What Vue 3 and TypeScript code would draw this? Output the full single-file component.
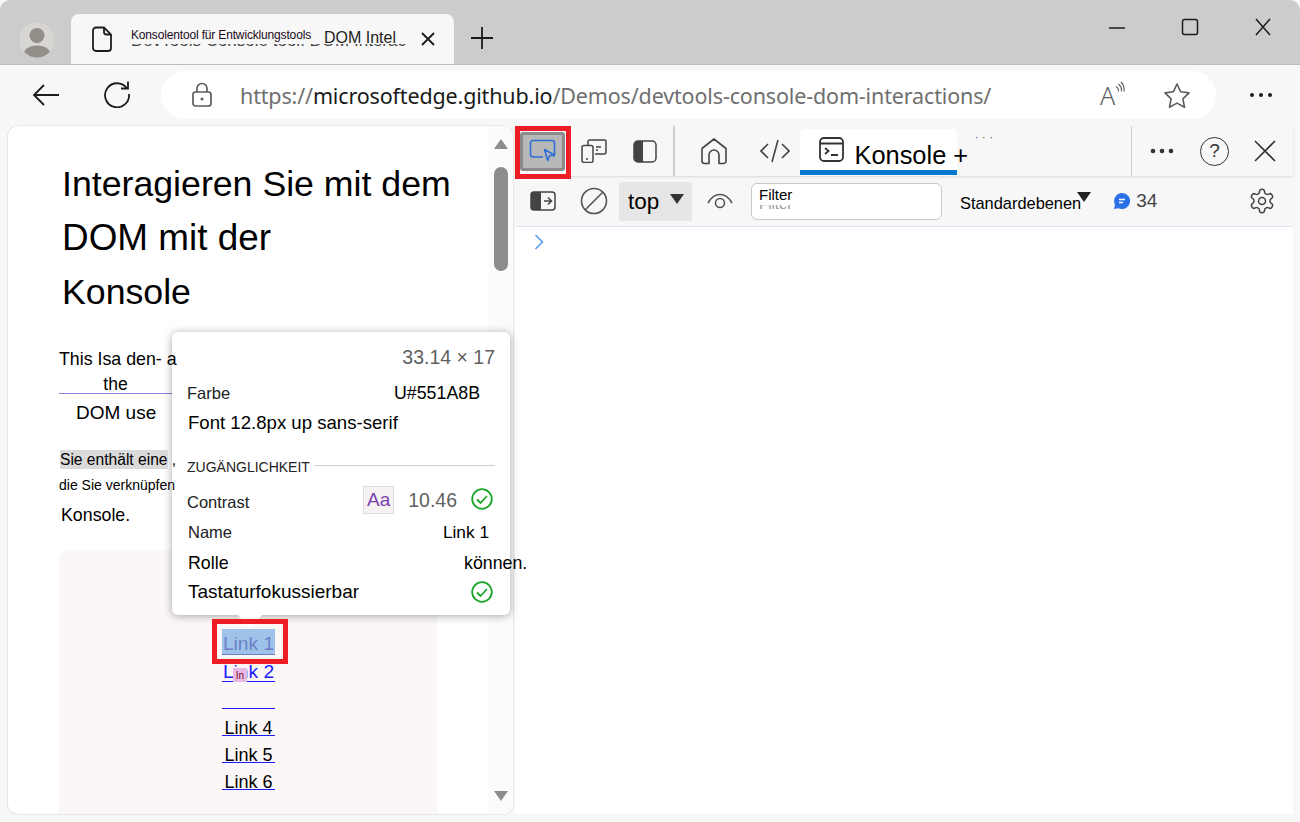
<template>
  <div class="window">
    <!-- Tab strip -->
    <header class="tabstrip">
      <svg class="avatar" width="36" height="36" viewBox="0 0 36 36">
        <defs><clipPath id="av"><circle cx="18" cy="18" r="17.5" /></clipPath></defs>
        <circle cx="18" cy="18" r="17.5" fill="#d8d6d2" />
        <g clip-path="url(#av)" fill="#928e88">
          <circle cx="18" cy="13.500" r="7.500" />
          <ellipse cx="18" cy="31" rx="13" ry="7.500" />
        </g>
      </svg>
      <div class="tab">
        <svg class="doc" width="22" height="26" viewBox="0 0 22 26" fill="none" stroke="#1c1c1c" stroke-width="1.800">
          <path d="M5 1.500h8l7 7v13.500a3 3 0 0 1-3 3H5a3 3 0 0 1-3-3V4.500a3 3 0 0 1 3-3z" />
          <path d="M13 1.500v4.500a2.500 2.500 0 0 0 2.500 2.500H20" />
        </svg>
        <div class="tab-title">
          <span class="ghost-title">DevTools Console tool: DOM Interactions</span>
          <div class="title-over">
            <span class="title-de">Konsolentool für Entwicklungstools</span>
            <span class="title-en">DOM Intel</span>
          </div>
        </div>
        <svg class="tab-close" width="14" height="14" viewBox="0 0 14 14" stroke="#1c1c1c" stroke-width="1.800">
          <path d="M1 1l12 12M13 1L1 13" />
        </svg>
      </div>
      <svg class="new-tab" width="24" height="24" viewBox="0 0 24 24" stroke="#1c1c1c" stroke-width="1.800">
        <path d="M12 1v22M1 12h22" />
      </svg>
      <div class="win-controls">
        <svg width="18" height="18" viewBox="0 0 18 18" stroke="#1c1c1c" stroke-width="1.500"><path d="M1 10h16" /></svg>
        <svg width="18" height="18" viewBox="0 0 18 18" fill="none" stroke="#1c1c1c" stroke-width="1.500"><rect x="1.500" y="1.500" width="15" height="15" rx="2" /></svg>
        <svg width="18" height="18" viewBox="0 0 18 18" stroke="#1c1c1c" stroke-width="1.500"><path d="M2 1l14 16M16 1L2 17" /></svg>
      </div>
    </header>

    <!-- Address bar -->
    <nav class="navbar">
      <svg class="back" width="28" height="24" viewBox="0 0 28 24" fill="none" stroke="#1c1c1c" stroke-width="1.800">
        <path d="M27 12H2M12 2L2 12l10 10" />
      </svg>
      <svg class="reload" width="28" height="28" viewBox="0 0 28 28" fill="none" stroke="#1c1c1c" stroke-width="1.800">
        <path d="M24 8.500A12 12 0 1 0 26 14" />
        <path d="M25 1.500v7h-7" />
      </svg>
      <div class="address">
        <svg class="lock" width="22" height="26" viewBox="0 0 22 26" fill="none" stroke="#5c5c5c" stroke-width="1.700">
          <path d="M6 10V6.500a5 5 0 0 1 10 0V10" />
          <rect x="2" y="10" width="18" height="14" rx="2.500" />
          <circle cx="11" cy="17" r="1.500" fill="#5c5c5c" stroke="none" />
        </svg>
        <span class="url"><span class="dim">https://</span>microsoftedge.github.io<span class="dim">/Demos/devtools-console-dom-interactions/</span></span>
        <span class="read-aloud">
          <span class="read-a">A</span>
          <svg width="10" height="16" viewBox="0 0 10 16" fill="none" stroke="#5c5c5c" stroke-width="1.100">
            <path d="M1 5.500a5 5 0 0 1 2.500 5M3.500 3a8 8 0 0 1 3 7.500M6 1a11 11 0 0 1 3 9.500" />
          </svg>
        </span>
        <svg class="star" width="28" height="27" viewBox="0 0 28 27" fill="none" stroke="#5c5c5c" stroke-width="1.600" stroke-linejoin="round">
          <path d="M14 2l3.700 7.800 8.300 1.100-6.100 5.900 1.600 8.400-7.500-4.100-7.500 4.100 1.600-8.400L2 10.900l8.300-1.100z" />
        </svg>
      </div>
      <svg class="more" width="24" height="6" viewBox="0 0 24 6" fill="#1c1c1c">
        <circle cx="3" cy="3" r="2" /><circle cx="12" cy="3" r="2" /><circle cx="21" cy="3" r="2" />
      </svg>
    </nav>

    <main class="main">
      <!-- Inspected page -->
      <section class="page">
        <div class="page-scroll">
          <div class="page-content">
            <h1>Interagieren Sie mit dem<br /><span class="h1-mid">DOM mit der</span><br />Konsole</h1>
            <p class="l-this">This Isa den- a</p>
            <p class="l-the">the</p>
            <p class="l-dom">DOM use</p>
            <p class="l-sie"><span class="hover-mark">Sie enthält eine</span> ,</p>
            <p class="l-die">die Sie verknüpfen</p>
            <p class="l-kon">Konsole.</p>
            <div class="link-box">
              <a class="link link-hover">Link 1</a>
              <a class="link">Link 2<span class="in-badge">In</span></a>
              <a class="link link-low"></a>
              <a v-for="n in [4, 5, 6]" :key="n" class="link link-low link-black">Link {{ n }}</a>
            </div>
          </div>
          <div class="scrollbar">
            <span class="arrow-up"></span>
            <span class="thumb"></span>
            <span class="arrow-down"></span>
          </div>
        </div>

        <!-- Inspect tooltip -->
        <div class="tooltip">
          <div class="tip-size">33.14 × 17</div>
          <div class="tip-row tip-color">
            <span class="small">Farbe</span><span class="val">U#551A8B</span>
          </div>
          <div class="tip-row tip-font">Font 12.8px up sans-serif</div>
          <div class="tip-head"><span>ZUGÄNGLICHKEIT</span><i></i></div>
          <div class="tip-row tip-contrast">
            <span class="small">Contrast</span>
            <span class="aa">Aa</span>
            <span class="ratio">10.46</span>
            <svg width="22" height="22" viewBox="0 0 22 22" fill="none" stroke="#18a528" stroke-width="1.800">
              <circle cx="11" cy="11" r="9.800" /><path d="M6 11.500l3.500 3.500L16 8" />
            </svg>
          </div>
          <div class="tip-row tip-name">
            <span class="small">Name</span><span class="val-name">Link 1</span>
          </div>
          <div class="tip-row tip-role"><span class="role-label">Rolle</span><span>können.</span></div>
          <div class="tip-row tip-key">
            <span class="key-label">Tastaturfokussierbar</span>
            <svg width="22" height="22" viewBox="0 0 22 22" fill="none" stroke="#18a528" stroke-width="1.800">
              <circle cx="11" cy="11" r="9.800" /><path d="M6 11.500l3.500 3.500L16 8" />
            </svg>
          </div>
        </div>
        <span class="tip-arrow"></span>
        <span class="link-outline"></span>
      </section>

      <!-- DevTools -->
      <section class="devtools">
        <div class="dt-tabs">
          <button class="inspect-btn">
            <svg width="27" height="24" viewBox="0 0 27 24" fill="none" stroke="#2b6fd6" stroke-width="1.600">
              <path d="M14 18H4a2.500 2.500 0 0 1-2.500-2.500V4A2.500 2.500 0 0 1 4 1.500h19A2.500 2.500 0 0 1 25.500 4v11.500a2.500 2.500 0 0 1-1.500 2.300" />
              <path d="M15.500 10.500l9 5-4 1.500-1.800 4.500z" stroke-linejoin="round" />
            </svg>
          </button>
          <svg class="i-device" width="26" height="24" viewBox="0 0 26 24" fill="none" stroke="#444" stroke-width="1.500">
            <path d="M7 6V3a2 2 0 0 1 2-2h15a1.500 1.500 0 0 1 1 1.500V13a2 2 0 0 1-2 2h-9" />
            <rect x="1" y="6.500" width="11" height="17" rx="2" fill="#f7f7f7" />
            <path d="M5 20h2M15 8h5M15 11h2" />
          </svg>
          <svg class="i-panel" width="24" height="23" viewBox="0 0 24 23">
            <rect x="1" y="1" width="22" height="21" rx="4" fill="#f7f7f7" stroke="#444" stroke-width="1.500" />
            <path d="M5 1h5v21H5a4 4 0 0 1-4-4V5a4 4 0 0 1 4-4z" fill="#444" />
          </svg>
          <span class="divider"></span>
          <svg class="i-home" width="28" height="28" viewBox="0 0 28 28" fill="none" stroke="#444" stroke-width="1.600" stroke-linejoin="round">
            <path d="M2 11.500L14 2l12 9.500V24a2.500 2.500 0 0 1-2.500 2.500H19V18a5 5 0 0 0-10 0v8.500H4.500A2.500 2.500 0 0 1 2 24z" />
          </svg>
          <svg class="i-code" width="30" height="24" viewBox="0 0 30 24" fill="none" stroke="#444" stroke-width="1.600">
            <path d="M8 5l-7 7 7 7M22 5l7 7-7 7M18 1l-6 22" />
          </svg>
          <div class="console-tab">
            <svg width="25" height="25" viewBox="0 0 25 25" fill="none" stroke="#333" stroke-width="1.800">
              <rect x="1" y="1" width="23" height="23" rx="4" />
              <path d="M1 6.500h23M6 11l3.500 3-3.500 3M12 18h7" />
            </svg>
            <span>Konsole +</span>
          </div>
          <span class="ghost-dots">· · ·</span>
          <div class="dt-right">
            <span class="divider"></span>
            <svg class="i-dots" width="24" height="6" viewBox="0 0 24 6" fill="#333">
              <circle cx="3" cy="3" r="2.300" /><circle cx="12" cy="3" r="2.300" /><circle cx="21" cy="3" r="2.300" />
            </svg>
            <span class="i-help">?</span>
            <svg class="i-close" width="22" height="22" viewBox="0 0 22 22" stroke="#333" stroke-width="1.600">
              <path d="M1 1l20 20M21 1L1 21" />
            </svg>
          </div>
        </div>

        <div class="dt-filter">
          <svg class="i-side" width="26" height="20" viewBox="0 0 26 20">
            <rect x="1" y="1" width="24" height="18" rx="3" fill="none" stroke="#444" stroke-width="1.500" />
            <path d="M4 1h7v18H4a3 3 0 0 1-3-3V4a3 3 0 0 1 3-3z" fill="#444" />
            <path d="M14 10h7M18 6.500l3.500 3.500-3.500 3.500" fill="none" stroke="#444" stroke-width="1.500" />
          </svg>
          <svg class="i-block" width="28" height="28" viewBox="0 0 28 28" fill="none" stroke="#555" stroke-width="1.600">
            <circle cx="14" cy="14" r="12.500" /><path d="M5 23L23 5" />
          </svg>
          <div class="ctx-select"><span>top</span><i class="caret"></i></div>
          <svg class="i-eye" width="28" height="16" viewBox="0 0 28 16" fill="none" stroke="#555" stroke-width="1.600">
            <path d="M2 10C6 3 10 1.500 14 1.500S22 3 26 10" /><circle cx="14" cy="10" r="4.500" />
          </svg>
          <div class="filter-input">
            <span class="filter-ghost">Filter</span>
            <span class="filter-text">Filter</span>
          </div>
          <span class="levels">Standardebenen</span>
          <i class="caret caret-levels"></i>
          <svg class="i-msg" width="16" height="16" viewBox="0 0 16 16">
            <path d="M8 0a8 8 0 1 1-3.400 15.200L0 16l1-4.300A8 8 0 0 1 8 0z" fill="#2a70e8" />
            <path d="M5 6.500h6M5 9.500h4" stroke="#fff" stroke-width="1.300" />
          </svg>
          <span class="msg-count">34</span>
          <svg class="i-gear" width="28" height="28" viewBox="0 0 24 24" fill="none" stroke="#444" stroke-width="1.300">
            <path d="M12.220 2h-.44a2 2 0 0 0-2 2v.18a2 2 0 0 1-1 1.730l-.43.25a2 2 0 0 1-2 0l-.15-.08a2 2 0 0 0-2.730.73l-.22.38a2 2 0 0 0 .73 2.730l.15.1a2 2 0 0 1 1 1.720v.51a2 2 0 0 1-1 1.740l-.15.09a2 2 0 0 0-.73 2.730l.22.38a2 2 0 0 0 2.730.73l.15-.08a2 2 0 0 1 2 0l.43.25a2 2 0 0 1 1 1.730V20a2 2 0 0 0 2 2h.44a2 2 0 0 0 2-2v-.18a2 2 0 0 1 1-1.730l.43-.25a2 2 0 0 1 2 0l.15.08a2 2 0 0 0 2.730-.73l.22-.39a2 2 0 0 0-.73-2.730l-.15-.08a2 2 0 0 1-1-1.740v-.5a2 2 0 0 1 1-1.740l.15-.09a2 2 0 0 0 .73-2.730l-.22-.38a2 2 0 0 0-2.730-.73l-.15.08a2 2 0 0 1-2 0l-.43-.25a2 2 0 0 1-1-1.730V4a2 2 0 0 0-2-2z" />
            <circle cx="12" cy="12" r="3" />
          </svg>
        </div>

        <div class="dt-console">
          <svg width="10" height="16" viewBox="0 0 10 16" fill="none" stroke="#5b9bf0" stroke-width="1.600">
            <path d="M1.500 1l7 7-7 7" />
          </svg>
        </div>

        <span class="inspect-outline"></span>
      </section>
    </main>
  </div>
</template>

<script setup lang="ts">
// Static picture of Edge with DevTools open, nothing here is interactive
</script>

<style>
html, body {
  margin: 0;
  background: #f7f7f7;
}
</style>

<style scoped>
.window {
  width: 1300px;
  height: 822px;
  display: flex;
  flex-direction: column;
  overflow: hidden;
  font-family: "Liberation Sans", Arial, sans-serif;
  color: #000;
  background: #f7f7f7;
}

/* tab strip */
.tabstrip {
  height: 65px;
  flex: none;
  display: flex;
  align-items: flex-end;
  background: #cccccc;
  border-radius: 10px 10px 0 0;
  border-bottom: 1px solid #bdbdbd;
  box-sizing: border-box;
}
.avatar {
  margin: 0 16px 6px 19px;
  flex: none;
}
.tab {
  width: 383px;
  height: 50px;
  flex: none;
  display: flex;
  align-items: center;
  background: #f7f7f7;
  border-radius: 8px 8px 0 0;
}
.doc {
  margin-left: 20px;
  flex: none;
}
.tab-title {
  position: relative;
  width: 275px;
  height: 26px;
  margin-left: 18px;
  overflow: hidden;
  white-space: nowrap;
}
.ghost-title {
  display: block;
  margin-top: 5px;
  font-size: 17px;
  line-height: 20px;
  color: #444;
}
.title-over {
  position: absolute;
  left: 0;
  top: 0;
  right: 0;
  height: 18px;
  display: flex;
  align-items: flex-start;
  background: #f7f7f7;
}
.title-de {
  font-size: 12px;
  line-height: 18px;
  letter-spacing: -0.160px;
  width: 193px;
  flex: none;
  color: #1a0a1a;
}
.title-en {
  font-size: 16px;
  line-height: 23px;
  color: #222;
}
.tab-close {
  margin-left: 15px;
  flex: none;
}
.new-tab {
  margin: 0 0 14px 16px;
  flex: none;
}
.win-controls {
  margin-left: auto;
  width: 164px;
  margin-right: 28px;
  align-self: flex-start;
  margin-top: 18px;
  display: flex;
  justify-content: space-between;
}

/* address bar */
.navbar {
  height: 60px;
  flex: none;
  display: flex;
  align-items: center;
  background: #f7f7f7;
}
.back {
  margin-left: 32px;
  flex: none;
}
.reload {
  margin: -2px 0 0 43px;
  flex: none;
}
.address {
  width: 1055px;
  height: 48px;
  margin-left: 30px;
  flex: none;
  display: flex;
  align-items: center;
  background: #fff;
  border-radius: 24px;
}
.lock {
  margin-left: 30px;
  flex: none;
}
.url {
  margin-left: 27px;
  width: 847px;
  flex: none;
  white-space: nowrap;
  font-family: "Noto Sans", sans-serif;
  font-size: 21.500px;
  letter-spacing: -0.150px;
  color: #1a1a1a;
}
.dim {
  color: #6f6f6f;
}
.read-aloud {
  display: flex;
  align-items: flex-start;
  width: 26px;
  flex: none;
  margin-left: 13px;
}
.read-a {
  font-family: "Noto Sans", sans-serif;
  font-size: 25px;
  line-height: 28px;
  font-weight: 300;
  color: #5c5c5c;
}
.star {
  margin-left: 37px;
  flex: none;
}
.more {
  margin-left: 33px;
  flex: none;
}

/* main split */
.main {
  flex: 1;
  min-height: 0;
  display: flex;
  gap: 2px;
  padding: 1px 7px 8px 8px;
}
.page {
  position: relative;
  width: 505px;
  flex: none;
  z-index: 2;
}
.page-scroll {
  height: 100%;
  display: flex;
  overflow: hidden;
  background: #fff;
  border-radius: 10px;
  box-shadow: 0 0 0 1px #e8e8e8;
}
.page-content {
  width: 481px;
  flex: none;
  box-sizing: border-box;
  padding: 31px 0 0 51px;
}
h1 {
  margin: 0 0 0 3px;
  font-size: 35.700px;
  font-weight: 400;
  line-height: 54px;
  white-space: nowrap;
}
.h1-mid {
  font-size: 36.900px;
}
p {
  margin: 0;
  white-space: nowrap;
}
.l-this {
  position: relative;
  z-index: 3;
  margin-top: 27px;
  font-size: 17.800px;
  line-height: 26px;
}
.l-the {
  width: 113px;
  margin-top: 4px;
  font-size: 17.500px;
  line-height: 17px;
  text-align: center;
  border-bottom: 1px solid #8a80d8;
}
.l-dom {
  margin: 7px 0 0 17px;
  font-size: 19px;
  line-height: 24px;
}
.l-sie {
  position: relative;
  z-index: 3;
  margin: 25px 0 0 1px;
  font-size: 15.600px;
  line-height: 19px;
}
.hover-mark {
  display: inline-block;
  background: #dadada;
}
.l-die {
  position: relative;
  z-index: 3;
  margin-top: 7px;
  font-size: 14px;
  line-height: 18px;
}
.l-kon {
  margin: 11px 0 0 2px;
  font-size: 17.800px;
  line-height: 20px;
}
.link-box {
  width: 378px;
  height: 300px;
  margin-top: 25px;
  box-sizing: border-box;
  padding-top: 79px;
  display: flex;
  flex-direction: column;
  align-items: center;
  gap: 6px;
  background: #fbf7f7;
  border-radius: 10px;
}
.link {
  position: relative;
  width: 53px;
  height: 20px;
  flex: none;
  margin-left: 1px;
  font-size: 19.200px;
  line-height: 22px;
  text-align: center;
  color: #1a1aff;
  border-bottom: 1px solid #1a1aff;
  white-space: nowrap;
}
.link-hover {
  padding-top: 5px;
  line-height: 20px;
  color: #6a80c8;
  background: #9fc2e8;
  border-bottom-color: #6a80c8;
}
.in-badge {
  position: absolute;
  left: 11px;
  top: 7px;
  width: 14px;
  height: 14px;
  font-size: 10px;
  line-height: 16px;
  color: #7a1020;
  background: #e8b8e8;
}
.link-low {
  line-height: 26px;
  font-size: 18px;
}
.link-black {
  color: #000;
}
.scrollbar {
  position: relative;
  flex: 1;
  background: #fbfbfb;
}
.arrow-up,
.arrow-down {
  position: absolute;
  left: 5px;
  width: 0;
  height: 0;
  border-left: 7.500px solid transparent;
  border-right: 7.500px solid transparent;
}
.arrow-up {
  top: 13px;
  border-bottom: 10px solid #8c8c8c;
}
.arrow-down {
  top: 665px;
  border-top: 10px solid #8c8c8c;
}
.thumb {
  position: absolute;
  left: 5px;
  top: 41px;
  width: 14px;
  height: 104px;
  background: #8c8c8c;
  border-radius: 7px;
}

/* inspect tooltip, sits over the page and the split */
.tooltip {
  position: absolute;
  left: 164px;
  top: 206px;
  width: 338px;
  height: 283px;
  box-sizing: border-box;
  padding-top: 13px;
  background: #fff;
  border-radius: 6px;
  box-shadow: 0 1px 9px rgba(0, 0, 0, 0.35);
  z-index: 2;
  white-space: nowrap;
}
.tip-size {
  padding-right: 15px;
  font-size: 19.500px;
  line-height: 24px;
  text-align: right;
  color: #5f5f5f;
}
.tip-row {
  display: flex;
  align-items: center;
  padding-left: 15px;
  line-height: 24px;
}
.small {
  font-size: 16.500px;
  color: #222;
}
.tip-color {
  margin-top: 12px;
  justify-content: space-between;
  padding-right: 30px;
}
.val {
  font-size: 17.800px;
}
.tip-font {
  margin-top: 6px;
  padding-left: 16px;
  font-size: 18.600px;
}
.tip-head {
  display: flex;
  align-items: center;
  gap: 4px;
  margin-top: 24px;
  padding: 0 15px;
  font-size: 14px;
  line-height: 16px;
  color: #222;
}
.tip-head i {
  flex: 1;
  height: 1px;
  background: #cfcfcf;
  margin-top: -3px;
}
.tip-contrast {
  height: 28px;
  margin-top: 11px;
}
.tip-contrast .small {
  margin-top: 4px;
}
.aa {
  width: 31px;
  height: 28px;
  margin-left: auto;
  box-sizing: border-box;
  border: 1px solid #ddd;
  background: #f7f2f2;
  font-size: 19px;
  line-height: 26px;
  text-align: center;
  color: #7a3fb0;
}
.ratio {
  margin: 0 14px;
  font-size: 19.500px;
  color: #5f5f5f;
}
.tip-contrast svg,
.tip-key svg {
  margin-right: 17px;
  flex: none;
}
.tip-contrast svg {
  margin-top: -3px;
}
.tip-name {
  margin-top: 6px;
  padding: 0 21px 0 16px;
  justify-content: space-between;
}
.val-name {
  font-size: 17.300px;
}
.tip-role {
  margin-top: 7px;
  padding-left: 16px;
  font-size: 17.800px;
}
.role-label {
  width: 276px;
  flex: none;
}
.tip-key {
  margin-top: 5px;
  padding-left: 16px;
  justify-content: space-between;
}
.key-label {
  font-size: 19px;
}
.tip-arrow {
  position: absolute;
  left: 230px;
  top: 489px;
  width: 0;
  height: 0;
  border-left: 12px solid transparent;
  border-right: 12px solid transparent;
  border-top: 14px solid #fff;
  z-index: 3;
}
.link-outline {
  position: absolute;
  left: 204px;
  top: 493px;
  width: 76px;
  height: 45px;
  box-sizing: border-box;
  border: 5px solid #ee1c25;
  z-index: 4;
}

/* devtools */
.devtools {
  position: relative;
  flex: 1;
  min-width: 0;
  display: flex;
  flex-direction: column;
  background: #fff;
}
.dt-tabs {
  height: 50px;
  flex: none;
  display: flex;
  align-items: center;
  background: #f7f7f7;
  box-shadow: 0 1px 2px rgba(0, 0, 0, 0.12);
  position: relative;
}
.inspect-btn {
  width: 45px;
  height: 39px;
  margin-left: 5px;
  flex: none;
  display: flex;
  align-items: center;
  justify-content: center;
  padding: 0;
  box-sizing: border-box;
  border: 3px solid #8b8b8b;
  border-radius: 3px;
  background: #b8b8b8;
}
.i-device {
  margin-left: 16px;
  flex: none;
}
.i-panel {
  margin-left: 26px;
  flex: none;
}
.divider {
  width: 1.500px;
  align-self: stretch;
  flex: none;
  background: #cfcfcf;
}
.dt-tabs > .divider {
  margin-left: 16px;
}
.i-home {
  margin-left: 25px;
  flex: none;
}
.i-code {
  margin-left: 32px;
  flex: none;
}
.console-tab {
  width: 157px;
  height: 46px;
  margin: 3px 0 1px 10px;
  flex: none;
  box-sizing: border-box;
  display: flex;
  align-items: center;
  gap: 11px;
  padding: 0 0 0 19px;
  background: #fff;
  border-bottom: 5px solid #0078d4;
  border-radius: 5px 5px 0 0;
  font-size: 25.400px;
  white-space: nowrap;
}
.console-tab svg {
  flex: none;
}
.console-tab span {
  position: relative;
  top: 6px;
}
.ghost-dots {
  align-self: flex-start;
  margin: 5px 0 0 18px;
  font-size: 12px;
  line-height: 12px;
  color: #666;
}
.dt-right {
  margin-left: auto;
  padding-right: 17px;
  align-self: stretch;
  display: flex;
  align-items: center;
}
.i-dots {
  margin-left: 18px;
  flex: none;
}
.i-help {
  width: 29px;
  height: 29px;
  margin-left: 26px;
  flex: none;
  box-sizing: border-box;
  border: 1.600px solid #333;
  border-radius: 50%;
  font-size: 19px;
  line-height: 26px;
  text-align: center;
  color: #333;
}
.i-close {
  margin-left: 25px;
  flex: none;
}
.dt-filter {
  height: 50px;
  flex: none;
  display: flex;
  align-items: center;
  background: #f7f7f7;
  border-bottom: 1px solid #d6e4f5;
  box-sizing: content-box;
}
.i-side {
  margin-left: 15px;
  flex: none;
}
.i-block {
  margin-left: 24px;
  flex: none;
}
.ctx-select {
  width: 73px;
  height: 39px;
  margin-left: 11px;
  flex: none;
  box-sizing: border-box;
  padding-left: 9px;
  display: flex;
  align-items: center;
  gap: 11px;
  background: #e6e6e6;
  border-radius: 2px;
  font-size: 22.500px;
}
.ctx-select span {
  margin-top: 2px;
}
.caret {
  width: 0;
  height: 0;
  flex: none;
  border-left: 7.500px solid transparent;
  border-right: 7.500px solid transparent;
  border-top: 10px solid #333;
  margin-top: -4px;
}
.i-eye {
  margin-left: 14px;
  flex: none;
}
.filter-input {
  position: relative;
  width: 191px;
  height: 37px;
  margin-left: 17px;
  flex: none;
  box-sizing: border-box;
  padding-left: 7px;
  overflow: hidden;
  background: #fff;
  border: 1.500px solid #c8c8c8;
  border-radius: 6px;
}
.filter-ghost {
  display: block;
  margin-top: 11px;
  font-size: 15px;
  line-height: 18px;
  color: #9a9a9a;
}
.filter-text {
  position: absolute;
  left: 7px;
  top: 1px;
  padding-right: 6px;
  font-size: 15px;
  line-height: 20px;
  background: #fff;
}
.levels {
  margin-left: 18px;
  flex: none;
  font-size: 16.400px;
  line-height: 20px;
  margin-top: 3px;
}
.caret-levels {
  margin-left: -4px;
  margin-top: -8px;
  border-top-color: #222;
}
.i-msg {
  margin-left: 23px;
  flex: none;
}
.msg-count {
  margin-left: 6px;
  flex: none;
  font-size: 19px;
  color: #444;
}
.i-gear {
  margin-left: auto;
  margin-right: 17px;
  flex: none;
}
.dt-console {
  padding: 7px 0 0 19px;
}
.inspect-outline {
  position: absolute;
  left: 0;
  top: 0;
  width: 56px;
  height: 53px;
  box-sizing: border-box;
  border: 5px solid #ee1c25;
}
</style>
